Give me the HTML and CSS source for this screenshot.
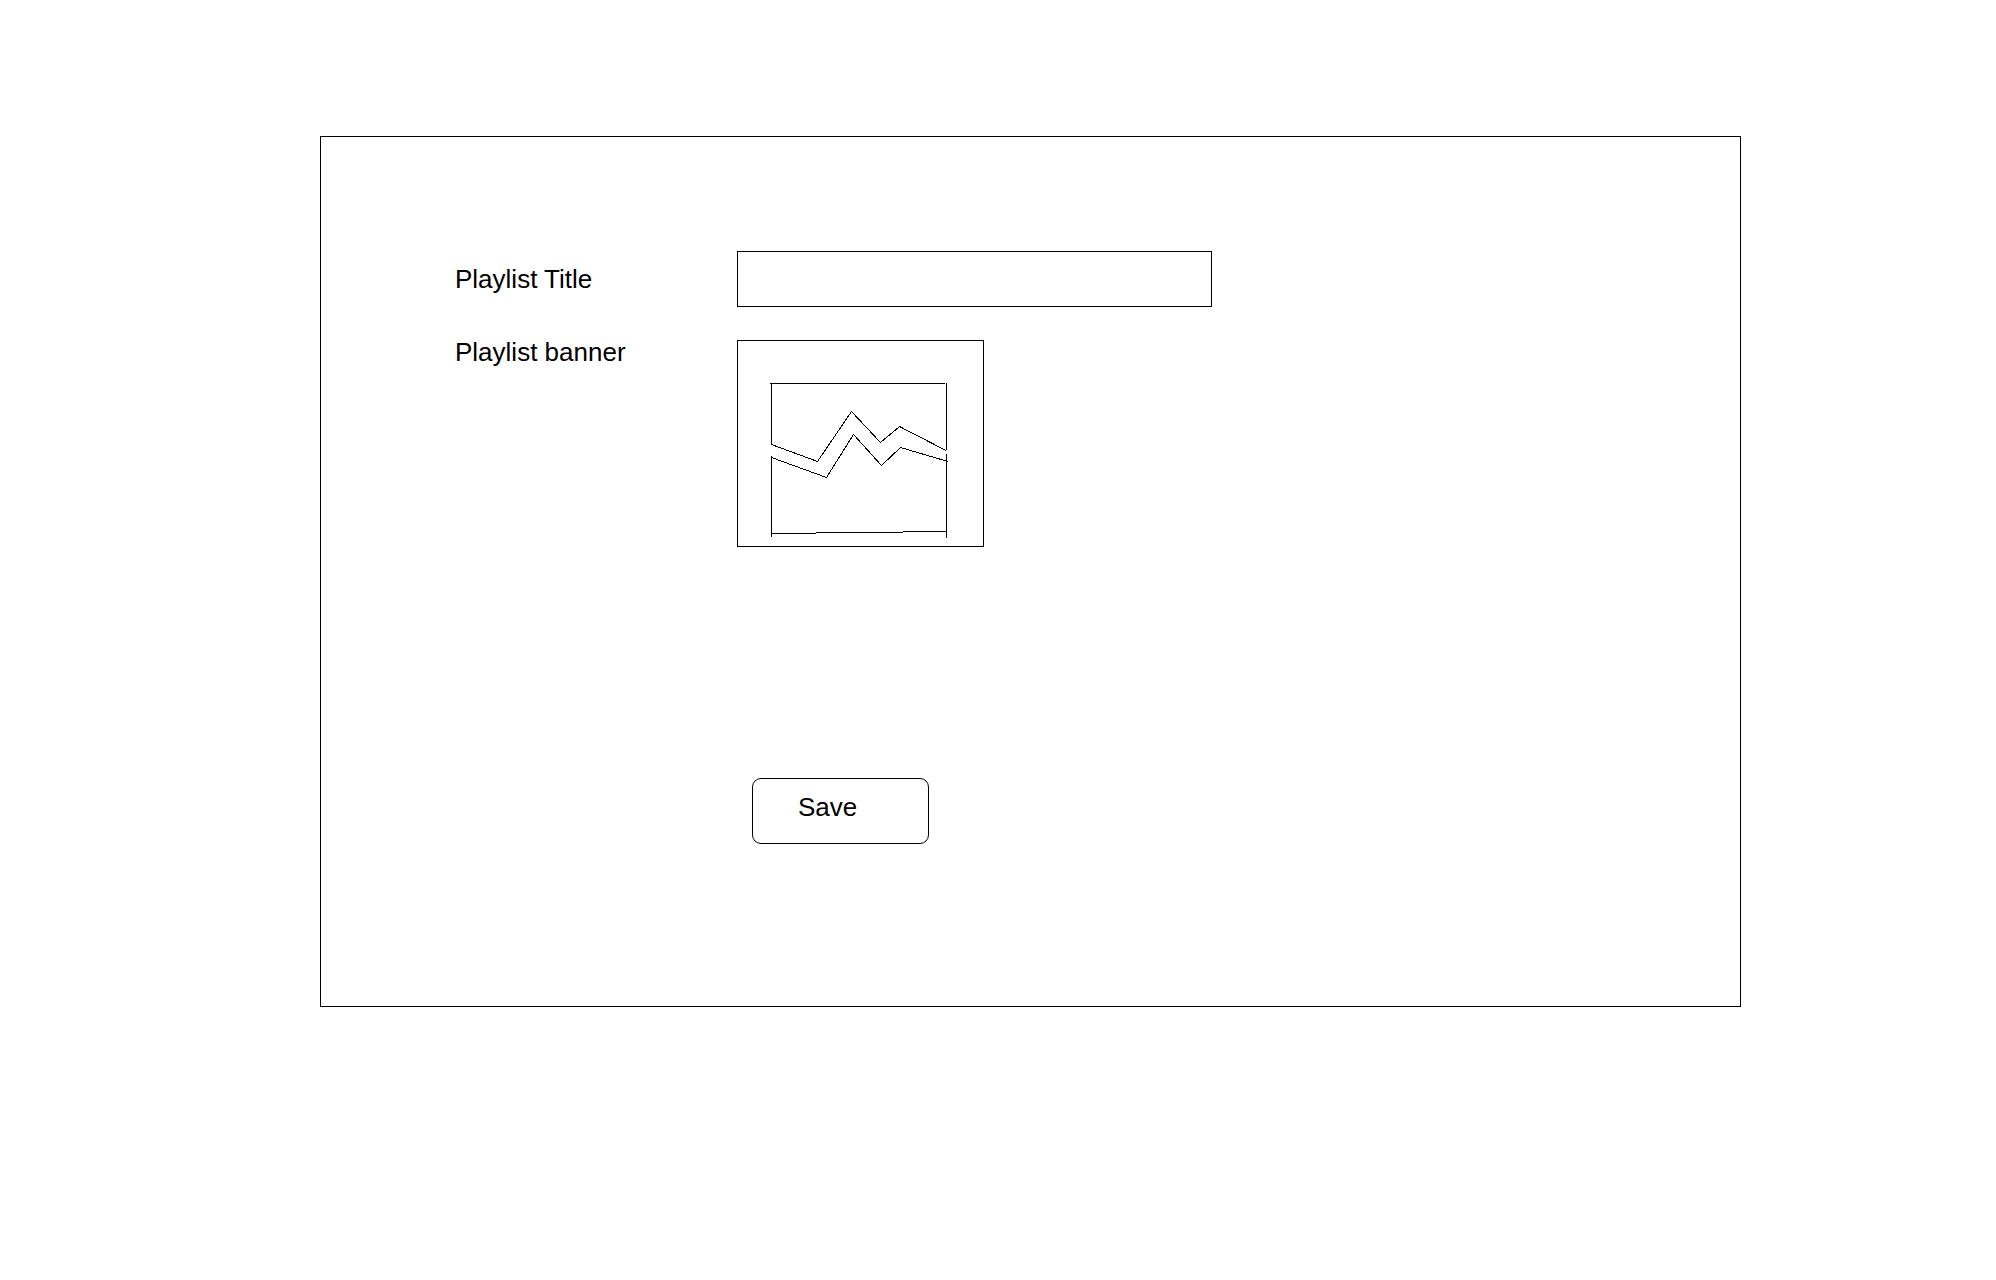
FILE: index.html
```html
<!DOCTYPE html>
<html lang="en">
<head>
  <meta charset="utf-8">
  <meta name="viewport" content="width=device-width, initial-scale=1">
  <title>Playlist</title>
  <link rel="stylesheet" href="styles.css">
</head>
<body>
  <main class="page">
    <form class="playlist-form">
      <label class="label label-title" for="playlist-title">Playlist Title</label>
      <input class="title-input" id="playlist-title" type="text">
      <label class="label" for="playlist-banner">Playlist banner</label>
      <button class="banner" id="playlist-banner" type="button">
        <svg class="banner-icon" viewBox="0 0 245 205" width="245" height="205" fill="none" stroke="currentColor" shape-rendering="crispEdges" aria-hidden="true">
          <path d="M32 42.5H207M33.5 42V104M208.5 42V109"/>
          <path d="M33.5 103.5L79.5 120.5L113.5 70.5L142.5 101.5L161.5 85.5L208 109.5"/>
          <path d="M33.5 115V196M208.5 113V197"/>
          <path d="M33.5 116.5L88.5 136.5L115.5 93.5L143.5 124.5L162.5 106.5L210 120.5"/>
          <path d="M33 192.5H78M78 191.5H165M165 190.5H209"/>
        </svg>
      </button>
      <button class="save" type="submit">Save</button>
    </form>
  </main>
</body>
</html>
```
FILE: styles.css
```css
* {
  box-sizing: border-box;
}

body {
  margin: 0;
  background: #fff;
  color: #000;
  font: 26px/24px "Liberation Sans", Arial, sans-serif;
}

.page {
  padding: 136px 255px 136px 320px;
}

.playlist-form {
  display: grid;
  grid-template-columns: 282px minmax(0, 1fr);
  row-gap: 33px;
  align-items: start;
  justify-items: start;
  padding: 114px 134px 162px;
  border: 1px solid #000;
}

.label-title {
  align-self: center;
}

.title-input,
.banner,
.save {
  border: 1px solid #000;
  border-radius: 0;
  background: transparent;
  color: inherit;
  font: inherit;
}

.title-input {
  width: 100%;
  max-width: 475px;
  height: 56px;
  padding: 0 12px;
}

.banner {
  display: flex;
  padding: 0;
}

.banner-icon {
  display: block;
}

.save {
  grid-column: 2;
  width: 177px;
  margin: 198px 0 0 15px;
  padding: 16px 45px 24px;
  border-radius: 9px;
  text-align: left;
}
```
